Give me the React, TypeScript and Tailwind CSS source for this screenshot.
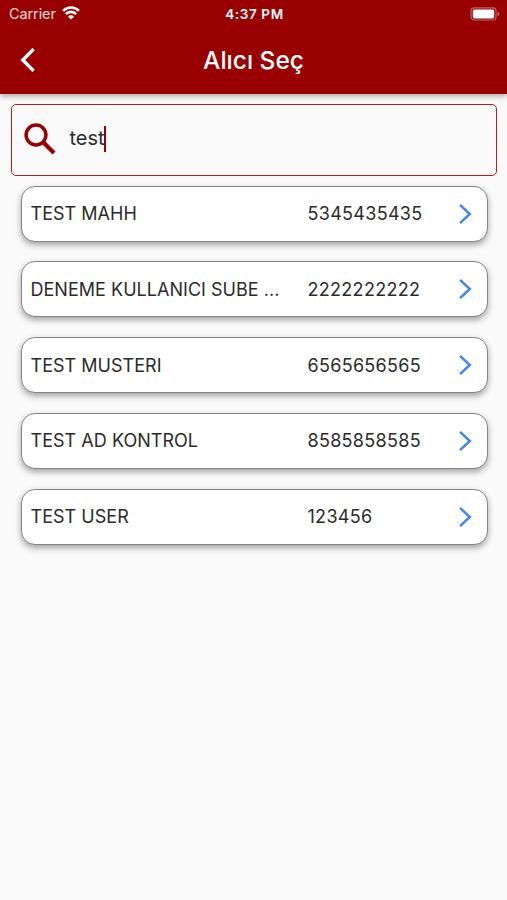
import React, { useState } from 'react';

interface Recipient {
  name: string;
  number: string;
}

const recipients: Recipient[] = [
  { name: 'TEST MAHH', number: '5345435435' },
  { name: 'DENEME KULLANICI SUBE ...', number: '2222222222' },
  { name: 'TEST MUSTERI', number: '6565656565' },
  { name: 'TEST AD KONTROL', number: '8585858585' },
  { name: 'TEST USER', number: '123456' },
];

const StatusBar: React.FC = () => (
  <div className="grid h-7 grid-cols-3 items-center pl-[9px] pr-[7px] text-white">
    <div className="flex items-center gap-[6px]">
      <span className="text-[14.5px] leading-7 tracking-[-0.1px] text-white/85">Carrier</span>
      <svg className="mb-[2px] h-[14px] w-[18px]" viewBox="0 0 19 14" fill="none" stroke="currentColor" strokeWidth="2.7">
        <path d="M1.1 4.7a12 12 0 0 1 16.8 0" />
        <path d="M4 8.1a7.8 7.8 0 0 1 11 0" />
        <path d="M9.5 13.9 6.3 10.9a4.3 4.3 0 0 1 6.4 0Z" fill="currentColor" stroke="none" />
      </svg>
    </div>
    <span className="text-center text-[13.5px] font-semibold leading-7 tracking-[0.6px]">4:37 PM</span>
    <svg className="mb-[1px] h-[14px] w-[30px] justify-self-end" viewBox="0 0 30 14" fill="none">
      <rect x="1" y="0.8" width="25" height="12.2" rx="3.2" stroke="white" strokeOpacity="0.4" strokeWidth="1.2" />
      <rect x="2.8" y="2.4" width="21.4" height="9" rx="1.6" fill="white" />
      <path d="M27.5 5v4c1.1-.4 1.8-1.1 1.8-2s-.7-1.6-1.8-2Z" fill="white" fillOpacity="0.45" />
    </svg>
  </div>
);

const Header: React.FC = () => (
  <header className="h-[94px] bg-[#990000] shadow-[0_2px_6px_rgba(0,0,0,0.35)]">
    <StatusBar />
    <div className="grid h-[63px] grid-cols-[60px_1fr_60px] items-center text-white">
      <button className="pl-5" aria-label="Geri">
        <svg className="h-6 w-[15px]" viewBox="0 0 15 24" fill="none" stroke="currentColor" strokeWidth="3.4">
          <path d="M13.6 1.1 2.8 12l10.8 10.9" />
        </svg>
      </button>
      <h1 className="text-center text-[24.5px] font-medium leading-8">Alıcı Seç</h1>
    </div>
  </header>
);

const RecipientRow: React.FC<{ recipient: Recipient }> = ({ recipient }) => (
  <li className="flex h-[56px] items-center rounded-[14px] border border-[#858585] bg-white pl-[9px] pr-[15px] text-[18px] text-[#2b2b2b] shadow-[0_3px_6px_rgba(0,0,0,0.35)]">
    <span className="w-[277px] whitespace-nowrap tracking-[0.03px]">{recipient.name}</span>
    <span className="flex-1 tracking-[0.3px]">{recipient.number}</span>
    <svg className="h-[20px] w-[13px]" viewBox="0 0 13 20" fill="none" stroke="#4285f4" strokeWidth="2.5">
      <path d="M1 .9 10.8 10 1 19.1" />
    </svg>
  </li>
);

export default function App() {
  const [query] = useState('test');

  return (
    <div className="h-[900px] w-full overflow-hidden bg-[#fafafa] font-['Inter',sans-serif]">
      <Header />
      <main className="pl-[10.5px] pr-[10px] pt-[9.5px]">
        {/* Search field */}
        <div className="flex h-[72px] items-center rounded-[5px] border border-[#a82326] pb-[2px] pl-[12px]">
          <svg className="h-8 w-8" viewBox="0 0 32 32" fill="none" stroke="#990000">
            <circle cx="12" cy="12" r="9.9" strokeWidth="3.5" />
            <path d="m19 19 11 11" strokeWidth="4.2" />
          </svg>
          <span className="ml-[14px] pb-[1px] text-[20px] leading-6 text-[#2b2b2b]">{query}</span>
          <span className="-ml-[1px] h-[26px] w-[2px] bg-[#990000]" />
        </div>

        <ul className="mt-[10px] space-y-[19.8px] pl-[10px] pr-[9.5px]">
          {recipients.map((recipient) => (
            <RecipientRow key={recipient.name} recipient={recipient} />
          ))}
        </ul>
      </main>
    </div>
  );
}
